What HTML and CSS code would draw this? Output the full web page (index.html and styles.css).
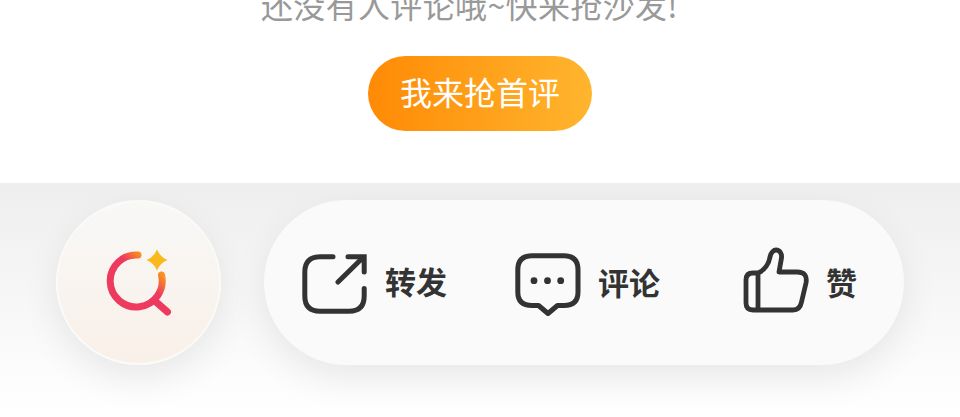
FILE: index.html
```html
<!DOCTYPE html>
<html lang="zh-CN">
<head>
    <meta charset="UTF-8">
    <meta name="viewport" content="width=device-width, initial-scale=1">
    <title>评论</title>
    <link rel="stylesheet" href="styles.css">
</head>
<body>
    <!-- Empty comment state -->
    <section class="empty">
        <p class="empty-text">还没有人评论哦~快来抢沙发!</p>
        <button type="button" class="first-btn">我来抢首评</button>
    </section>

    <!-- Bottom action bar -->
    <section class="bar">
        <div class="search-btn">
            <svg class="icon-search" width="80" height="75" viewBox="0 0 80 75" fill="none">
                <defs>
                    <linearGradient id="ringGrad" gradientUnits="userSpaceOnUse" x1="50" y1="18" x2="39" y2="29">
                        <stop offset="0" stop-color="#f7931e"/>
                        <stop offset="1" stop-color="#ee3a5e"/>
                    </linearGradient>
                </defs>
                <path d="M38 10A26 26 0 1 0 61.5 30" stroke="url(#ringGrad)" stroke-width="7" stroke-linecap="round"/>
                <path d="M55 56L67.5 67" stroke="#ee3a5e" stroke-width="7" stroke-linecap="round"/>
                <path d="M57 4.5Q60 12 67.5 15Q60 18 57 25.5Q54 18 46.5 15Q54 12 57 4.5Z" fill="#f9b81c"/>
            </svg>
        </div>
        <div class="actions">
            <div class="action action-share">
                <svg width="66" height="60" viewBox="0 0 66 60" fill="none">
                    <path d="M31 2.8H18Q2.8 2.8 2.8 18V42Q2.8 57.2 18 57.2H47Q62.2 57.2 62.2 42V34.5" stroke="#333" stroke-width="5" stroke-linecap="round"/>
                    <path d="M36 28L61 3.5M46 2.8H62.2V18" stroke="#333" stroke-width="5" stroke-linecap="round"/>
                </svg>
                <span>转发</span>
            </div>
            <div class="action action-comment">
                <svg width="66" height="64" viewBox="0 0 66 64" fill="none">
                    <path d="M17 2.8H49Q63 2.8 63 17V39Q63 52.5 49 52.5H42.5L33 60.5L23.5 52.5H17Q2.8 52.5 2.8 39V17Q2.8 2.8 17 2.8Z" stroke="#333" stroke-width="5" stroke-linejoin="round"/>
                    <circle cx="19" cy="27.7" r="3.4" fill="#333"/>
                    <circle cx="32.5" cy="27.7" r="3.4" fill="#333"/>
                    <circle cx="45.7" cy="27.7" r="3.4" fill="#333"/>
                </svg>
                <span>评论</span>
            </div>
            <div class="action action-like">
                <svg width="66" height="66" viewBox="0 0 66 66" fill="none">
                    <path d="M15 26C22 23 26 16 27 10C28 5 31 3 33 3C37 3 39 7 38.5 11L36 25H54Q65 25 63 36L58.5 55Q57 63 50 63H10Q3 63 3 56V33Q3 26 10 26H15V63" stroke="#333" stroke-width="4.8" stroke-linejoin="round"/>
                </svg>
                <span>赞</span>
            </div>
        </div>
    </section>
</body>
</html>
```

FILE: styles.css
```css
html, body {
    height: 417px;
    overflow: hidden;
}
body {
    font-family: "Noto Sans CJK SC", "Noto Sans", sans-serif;
    background-color: #fff;
    color: #333;
    margin: 0;
}
.empty {
    height: 183px;
    display: flex;
    flex-direction: column;
    align-items: center;
}
.empty-text {
    margin: -16px 0 0;
    padding-right: 21px;
    font-size: 32px;
    line-height: 40px;
    letter-spacing: 0.36px;
    color: #999;
    white-space: nowrap;
}
.first-btn {
    width: 224px;
    height: 75px;
    margin-top: 32px;
    border: none;
    border-radius: 38px;
    background: linear-gradient(90deg, #ff8a05, #ffb52e);
    color: #fff;
    font-family: inherit;
    font-size: 32px;
    padding: 0 0 6px;
}
.bar {
    height: 234px;
    box-sizing: border-box;
    padding: 17px 0 0 56px;
    display: flex;
    align-items: flex-start;
    gap: 43px;
    background: linear-gradient(180deg, #eeeeee 0, #fbfbfb 75%, #fff 100%);
}
.search-btn {
    width: 165px;
    height: 165px;
    box-sizing: border-box;
    border: 2px solid #fafaf8;
    border-radius: 50%;
    background: linear-gradient(180deg, #f8f8f7, #f9f0e8);
    box-shadow: 0 14px 36px rgba(0, 0, 0, 0.08);
    display: flex;
    padding: 43px 0 0 42px;
}
.icon-search {
    flex: none;
}
.actions {
    width: 640px;
    height: 165px;
    box-sizing: border-box;
    padding-left: 38px;
    border-radius: 83px;
    background-color: #fafafa;
    box-shadow: 0 14px 36px rgba(0, 0, 0, 0.08);
    display: flex;
    align-items: center;
}
.action {
    display: flex;
    align-items: center;
    gap: 17px;
    font-size: 31px;
    font-weight: 700;
    color: #333;
    line-height: 40px;
}
.action svg {
    flex: none;
}
.action-share {
    padding-top: 3px;
}
.action-share span {
    padding-bottom: 6px;
}
.action-comment {
    margin-left: 68px;
    padding-top: 5px;
}
.action-comment span {
    padding-bottom: 7px;
}
.action-like {
    margin-left: 83px;
    margin-top: -6px;
}
.action-like span {
    padding-top: 4px;
}
```
